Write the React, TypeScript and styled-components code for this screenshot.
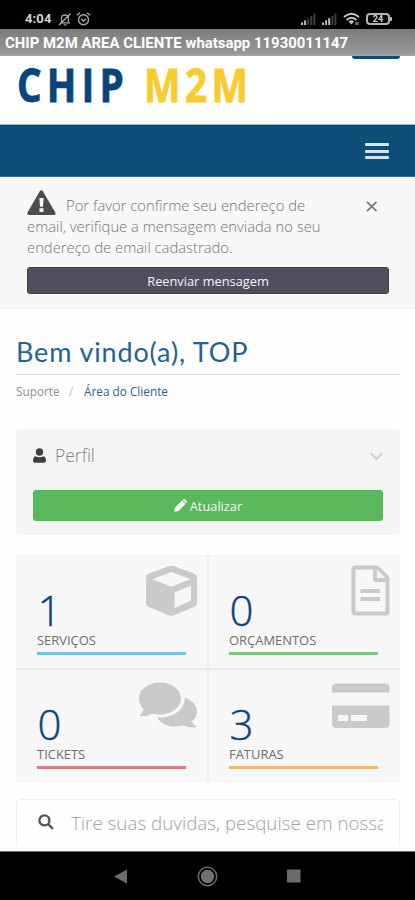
import React from "react";
import styled, { createGlobalStyle } from "styled-components";

const GlobalStyle = createGlobalStyle`
  * { box-sizing: border-box; }
  html, body { margin: 0; padding: 0; background: #fff; }
  body { font-family: "Open Sans", sans-serif; font-weight: 300; }
`;

const Screen = styled.div`
  width: 415px;
  height: 900px;
  overflow: hidden;
  display: flex;
  flex-direction: column;
  background: #fefefe;
`;

const StatusBar = styled.div`
  flex: none;
  height: 29px;
  padding: 9px 25px 0 25px;
  display: flex;
  align-items: flex-start;
  background: #000;
  color: #d6d6d6;
`;

const Clock = styled.span`
  width: 33px;
  font: 700 13px/20px Roboto, sans-serif;
  letter-spacing: 0.1px;
  white-space: nowrap;
`;

const Spacer = styled.div`
  flex: 1;
`;

const Glyph = styled.svg<{ $ml?: number; $mt?: number }>`
  flex: none;
  display: block;
  margin-left: ${(p) => p.$ml ?? 0}px;
  margin-top: ${(p) => p.$mt ?? 0}px;
`;

const Battery = styled.div`
  position: relative;
  width: 24px;
  height: 12px;
  margin: 4px 0 0 6px;
  border: 2px solid #b4b4b4;
  border-radius: 4px;
  font: 700 9px/8px Roboto, sans-serif;
  text-align: center;
  &::after {
    content: "";
    position: absolute;
    right: -4px;
    top: 2px;
    width: 2px;
    height: 4px;
    background: #b4b4b4;
  }
`;

const AppTitle = styled.div`
  flex: none;
  height: 27px;
  padding-left: 5px;
  background: linear-gradient(#7b7b7b, #999 90%, #a9a9a9);
  color: #fff;
  font: 700 14.9px/28px Roboto, sans-serif;
  letter-spacing: 0.02px;
  white-space: nowrap;
`;

const Header = styled.header`
  flex: none;
  height: 69px;
  padding: 0 15px 0 17px;
  display: flex;
  justify-content: space-between;
  background: #fff;
  border-bottom: 1px solid #9fc3dc;
`;

const Logo = styled.div`
  display: flex;
  gap: 18px;
  height: 58px;
  font: 700 46px/56px "Open Sans", sans-serif;
`;

const LogoWord = styled.span<{ $color: string; $spacing: number; $width: number }>`
  display: block;
  width: ${(p) => p.$width}px;
  color: ${(p) => p.$color};
  letter-spacing: ${(p) => p.$spacing}px;
  transform: scaleX(0.84);
  transform-origin: left;
  -webkit-text-stroke: 0.8px ${(p) => p.$color};
  white-space: nowrap;
`;

const HeaderTab = styled.div`
  width: 48px;
  height: 3px;
  border-radius: 0 0 3px 3px;
  background: #0f4c75;
`;

const NavBar = styled.nav`
  flex: none;
  height: 52px;
  padding-right: 26px;
  display: flex;
  align-items: center;
  justify-content: flex-end;
  background: #0d4f78;
  border-top: 1px solid #083f66;
  border-bottom: 1px solid #3c7092;
`;

const Burger = styled.div`
  width: 24px;
  height: 16px;
  display: flex;
  flex-direction: column;
  justify-content: space-between;
`;

const BurgerLine = styled.span`
  height: 3px;
  border-radius: 1px;
  background: #d5e3ec;
`;

const Alert = styled.section`
  flex: none;
  height: 132px;
  padding: 12px 26px 0 27px;
  background: #f8f8f8;
  border-bottom: 1px solid #f1f1f1;
`;

const AlertRow = styled.div`
  display: flex;
  justify-content: space-between;
  height: 78px;
`;

const AlertText = styled.p`
  margin: 0;
  padding-top: 6px;
  color: #737373;
  font-size: 14.8px;
  line-height: 21px;
  white-space: nowrap;
`;

const TextLine = styled.span<{ $indent?: number }>`
  display: block;
  padding-left: ${(p) => p.$indent ?? 0}px;
`;

const AlertIcon = styled.svg`
  position: absolute;
  left: 27px;
  top: 190px;
`;

const Button = styled.div<{ $bg: string; $border: string; $height: number }>`
  display: flex;
  align-items: center;
  justify-content: center;
  gap: 3px;
  height: ${(p) => p.$height}px;
  background: ${(p) => p.$bg};
  border: 1px solid ${(p) => p.$border};
  border-radius: 3px;
  color: #f5f5f5;
  font-weight: 400;
  font-size: 12.8px;
`;

const Main = styled.main`
  flex: 1;
  min-height: 0;
  overflow: hidden;
  padding: 0 15px 0 16px;
`;

const Heading = styled.h1`
  margin: 0;
  height: 66px;
  padding-top: 25px;
  border-bottom: 1px solid #e2e2e2;
  color: #22638f;
  font: 400 27px/36px Lato, sans-serif;
  letter-spacing: 0.85px;
  white-space: nowrap;
`;

const Crumbs = styled.div`
  display: flex;
  height: 54px;
  padding-top: 8px;
  font-size: 11.8px;
  line-height: 16px;
  font-weight: 400;
  white-space: nowrap;
`;

const Crumb = styled.span<{ $color: string; $width?: number }>`
  width: ${(p) => (p.$width ? `${p.$width}px` : "auto")};
  color: ${(p) => p.$color};
`;

const Profile = styled.section`
  height: 106px;
  padding: 0 17px;
  background: #f5f5f5;
  border-radius: 3px;
`;

const ProfileHead = styled.div`
  display: flex;
  align-items: center;
  height: 61px;
  padding-bottom: 9px;
`;

const ProfileTitle = styled.span`
  margin-left: 9px;
  color: #808080;
  font-size: 17.5px;
`;

const Stats = styled.section`
  display: grid;
  grid-template-columns: 193px 191px;
  grid-template-rows: 115px 112px;
  margin-top: 20px;
  background: #f7f7f7;
`;

const Stat = styled.div<{ $right?: boolean; $top?: boolean }>`
  position: relative;
  padding: ${(p) => (p.$top ? 31 : 30)}px 0 0 ${(p) => (p.$right ? 20 : 21)}px;
  border-right: ${(p) => (p.$right ? "0" : "2px solid #ededed")};
  border-bottom: ${(p) => (p.$top ? "2px solid #ebebeb" : "0")};
`;

const StatNumber = styled.div`
  height: 47px;
  padding-left: 0.5px;
  color: #0b4480;
  font-size: 42px;
  line-height: 47px;
  -webkit-text-stroke: 0.4px #0b4480;
`;

const StatLabel = styled.div`
  height: 19px;
  color: #6d6d6d;
  font-size: 12.95px;
  line-height: 14px;
  font-weight: 400;
`;

const StatBar = styled.div<{ $color: string }>`
  width: 149px;
  height: 3px;
  background: ${(p) => p.$color};
`;

const StatIcon = styled.svg<{ $top: number }>`
  position: absolute;
  top: ${(p) => p.$top}px;
  right: 10px;
  fill: #cacaca;
`;

const Search = styled.div`
  display: flex;
  align-items: flex-start;
  height: 46px;
  margin-top: 17px;
  padding: 0 16px 0 21px;
  border: 1px solid #efefef;
  border-bottom: 0;
  border-radius: 5px 5px 0 0;
`;

const SearchText = styled.div`
  flex: 1;
  margin-left: 17px;
  overflow: hidden;
  color: #a3a3a3;
  font-size: 18.8px;
  line-height: 46px;
  white-space: nowrap;
`;

const SystemNav = styled.div`
  flex: none;
  height: 49px;
  padding: 0 114px;
  display: flex;
  align-items: center;
  justify-content: space-between;
  background: #000;
  border-top: 1px solid #666;
`;

function Signal({ ml, level }: { ml: number; level: number }) {
  return (
    <Glyph $ml={ml} $mt={4} width="15" height="12" viewBox="0 0 15 12">
      {[0, 1, 2, 3, 4].map((i) => (
        <rect
          key={i}
          x={i * 3.1}
          y={9.5 - i * 2.2}
          width="2"
          height={2.5 + i * 2.2}
          fill={i < level ? "#bdbdbd" : "#3e3e3e"}
        />
      ))}
    </Glyph>
  );
}

const CubeIcon = () => (
  <StatIcon $top={10} width="51" height="51" viewBox="0 0 51 51">
    <path
      fillRule="evenodd"
      d="M23.5 1.1Q25.5 .4 27.500 1.100L48.500 8.800Q51 9.800 51 12.500V38Q51 40.500 48.800 41.500L27.500 50.500Q25.500 51.300 23.500 50.500L2.200 41.800Q0 40.700 0 38.200V12.500Q0 9.800 2.500 8.800ZM6.300 14.200 25.500 21.800 44.700 14.200 25.500 7ZM28.500 27.500V43L45 35.500V20.500Z"
    />
  </StatIcon>
);

const FileIcon = () => (
  <StatIcon $top={10} width="39" height="51" viewBox="0 0 39 51">
    <path
      fillRule="evenodd"
      d="M4 .5H25Q27 .5 28.500 2L37 10.300Q38.500 12 38.500 14V47Q38.500 50.500 35 50.500H4Q.5 50.500 .5 47V4Q.5 .5 4 .5ZM4.500 4.500V46.500H34.500V17H25Q22 17 22 14V4.500ZM26 5V13H34Q33.500 12 32.700 11.200L27.700 6.200Q27 5.500 26 5Z"
    />
    <path d="M9.500 24H29V28H9.500ZM9.500 32H29V36H9.500Z" />
  </StatIcon>
);

const CommentsIcon = () => (
  <StatIcon $top={9} width="58" height="49" viewBox="0 0 58 49">
    <path d="M21 3.500C32.500 3.500 42 10.600 42 19.500S32.500 35.500 21 35.500Q17 35.500 13.500 34.500Q7.500 38 1 37Q.5 36.300 1.300 35.600Q4 33 4.500 30Q0 25.500 0 19.500C0 10.600 9.500 3.500 21 3.500Z" />
    <path d="M45.500 18.500C52.500 20.700 58 26 58 32.500Q58 38.500 53 42.500Q54 45.500 57 47.500Q57.500 48.500 56.500 48.500Q50 49 44.500 46.500C33.500 49.500 21.500 46 18.500 38.500C34 39.500 47 30 45.500 18.500Z" />
  </StatIcon>
);

const CardIcon = () => (
  <StatIcon $top={10} width="58" height="48" viewBox="0 0 58 48">
    <path
      fillRule="evenodd"
      d="M0 12.500V7.500Q0 3.500 4.500 3.500H53Q57.500 3.500 57.500 7.500V12.500ZM0 25.500H57.500V43.500Q57.500 48 53 48H4.500Q0 48 0 43.500ZM7 35Q6 35 6 36V40Q6 41 7 41H16V35ZM20 35Q19 35 19 36V40Q19 41 20 41H35V35Z"
    />
  </StatIcon>
);

export default function App() {
  return (
    <>
      <GlobalStyle />
      <Screen>
        <StatusBar>
          <Clock>4:04</Clock>
          <Glyph $mt={4} width="14" height="13" viewBox="0 0 14 13" fill="none" stroke="#a8a8a8" strokeWidth="1.3">
            <path d="M2.200 9.800H12M3.500 9V5Q3.500 2 7 2T10.500 5V9M5.700 11.800H8.500M1 12 12.500 .7" />
          </Glyph>
          <Glyph $ml={4} $mt={3} width="15" height="14" viewBox="0 0 15 14" fill="none" stroke="#a8a8a8" strokeWidth="1.4">
            <circle cx="7.500" cy="7.700" r="5" />
            <path d="M5.200 6.800 7.500 9 10 6.800M.8 3.300 4 .8M14.200 3.300 11 .8" />
          </Glyph>
          <Spacer />
          <Signal ml={0} level={2} />
          <Signal ml={6} level={3} />
          <Glyph $ml={6} $mt={3} width="17" height="14" viewBox="0 0 17 14" fill="none" stroke="#c6c6c6" strokeWidth="1.8">
            <path d="M1 5Q8.500 -1.500 16 5M3.500 8Q8.500 3.500 13.500 8" />
            <path d="M5.500 9.500Q8.500 7.200 11 9.500L8.500 12.500Z" fill="#c6c6c6" stroke="none" />
            <path d="M13 10V13M15 10V13" strokeWidth="1" />
          </Glyph>
          <Battery>24</Battery>
        </StatusBar>
        <AppTitle>CHIP M2M AREA CLIENTE whatsapp 11930011147</AppTitle>
        <Header>
          <Logo>
            <LogoWord $color="#07457d" $spacing={6.2} $width={109}>CHIP</LogoWord>
            <LogoWord $color="#f8cb2e" $spacing={5.3} $width={108}>M2M</LogoWord>
          </Logo>
          <HeaderTab />
        </Header>
        <NavBar>
          <Burger>
            <BurgerLine />
            <BurgerLine />
            <BurgerLine />
          </Burger>
        </NavBar>
        <Alert>
          <AlertIcon width="29" height="26" viewBox="0 0 29 26">
            <path
              d="M12.800 1.300Q14.300 -.8 15.800 1.300L28.300 22.500Q29.300 25 26.800 25H2Q-.5 25 .5 22.500Z"
              fill="#4c4c4c"
            />
            <path d="M12.300 8H16.700L16 16.800H13ZM12.500 18.300H16.500V22H12.500Z" fill="#f8f8f8" />
          </AlertIcon>
          <AlertRow>
            <AlertText>
              <TextLine $indent={39}>Por favor confirme seu endereço de</TextLine>
              <TextLine>email, verifique a mensagem enviada no seu</TextLine>
              <TextLine>endereço de email cadastrado.</TextLine>
            </AlertText>
            <Glyph $mt={12} width="34" height="11" viewBox="0 0 34 11" stroke="#777" strokeWidth="1.7">
              <path d="M12 .8 21.500 10.200M21.500 .8 12 10.200" />
            </Glyph>
          </AlertRow>
          <Button $bg="#514f5f" $border="#3e3c4c" $height={27}>
            Reenviar mensagem
          </Button>
        </Alert>
        <Main>
          <Heading>Bem vindo(a), TOP</Heading>
          <Crumbs>
            <Crumb $color="#8e8e8e" $width={53}>Suporte</Crumb>
            <Crumb $color="#bdbdbd" $width={15}>/</Crumb>
            <Crumb $color="#2f6387">Área do Cliente</Crumb>
          </Crumbs>
          <Profile>
            <ProfileHead>
              <Glyph width="13" height="15" viewBox="0 0 13 15" fill="#3f3f3f">
                <circle cx="6.500" cy="4" r="3.700" />
                <path d="M2.500 8.300Q6.500 10.300 10.500 8.300Q13 9 13 12.500Q13 14.800 11 14.800H2Q0 14.800 0 12.500Q0 9 2.500 8.300Z" />
              </Glyph>
              <ProfileTitle>Perfil</ProfileTitle>
              <Spacer />
              <Glyph $mt={3} width="13" height="9" viewBox="0 0 13 9" fill="none" stroke="#d0d0d0" strokeWidth="2">
                <path d="M.8 1.200 6.500 7 12.200 1.200" />
              </Glyph>
            </ProfileHead>
            <Button $bg="#5cb85c" $border="#56b356" $height={31}>
              <Glyph width="13" height="13" viewBox="0 0 13 13" fill="#fff">
                <path d="M8 1.500 11.500 5 4.500 12 .3 12.700 1 8.500ZM8.700 .9 9.200.5Q10.200 -.2 11.100.6L12.400 1.900Q13.200 2.800 12.500 3.800L12.100 4.300Z" />
              </Glyph>
              Atualizar
            </Button>
          </Profile>
          <Stats>
            <Stat $top>
              <StatNumber>1</StatNumber>
              <StatLabel>SERVIÇOS</StatLabel>
              <StatBar $color="#77c4dc" />
              <CubeIcon />
            </Stat>
            <Stat $right $top>
              <StatNumber>0</StatNumber>
              <StatLabel>ORÇAMENTOS</StatLabel>
              <StatBar $color="#7fc684" />
              <FileIcon />
            </Stat>
            <Stat>
              <StatNumber>0</StatNumber>
              <StatLabel>TICKETS</StatLabel>
              <StatBar $color="#d97c7e" />
              <CommentsIcon />
            </Stat>
            <Stat $right>
              <StatNumber>3</StatNumber>
              <StatLabel>FATURAS</StatLabel>
              <StatBar $color="#edb872" />
              <CardIcon />
            </Stat>
          </Stats>
          <Search>
            <Glyph $mt={14} width="16" height="16" viewBox="0 0 15 15" fill="none" stroke="#555" strokeWidth="2.200">
              <circle cx="6" cy="6" r="4.700" />
              <path d="M9.500 9.500 14 14" />
            </Glyph>
            <SearchText>Tire suas duvidas, pesquise em nossa</SearchText>
          </Search>
        </Main>
        <SystemNav>
          <Glyph width="13" height="15" viewBox="0 0 13 15" fill="#6b6b6b">
            <path d="M0 7.500 13 .5V14.500Z" />
          </Glyph>
          <Glyph width="21" height="21" viewBox="0 0 21 21">
            <circle cx="10.500" cy="10.500" r="9.200" fill="none" stroke="#6b6b6b" strokeWidth="1.500" />
            <circle cx="10.500" cy="10.500" r="6.700" fill="#717171" />
          </Glyph>
          <Glyph width="14" height="14" viewBox="0 0 14 14">
            <rect width="13.500" height="13" y=".5" fill="#6b6b6b" />
          </Glyph>
        </SystemNav>
      </Screen>
    </>
  );
}
